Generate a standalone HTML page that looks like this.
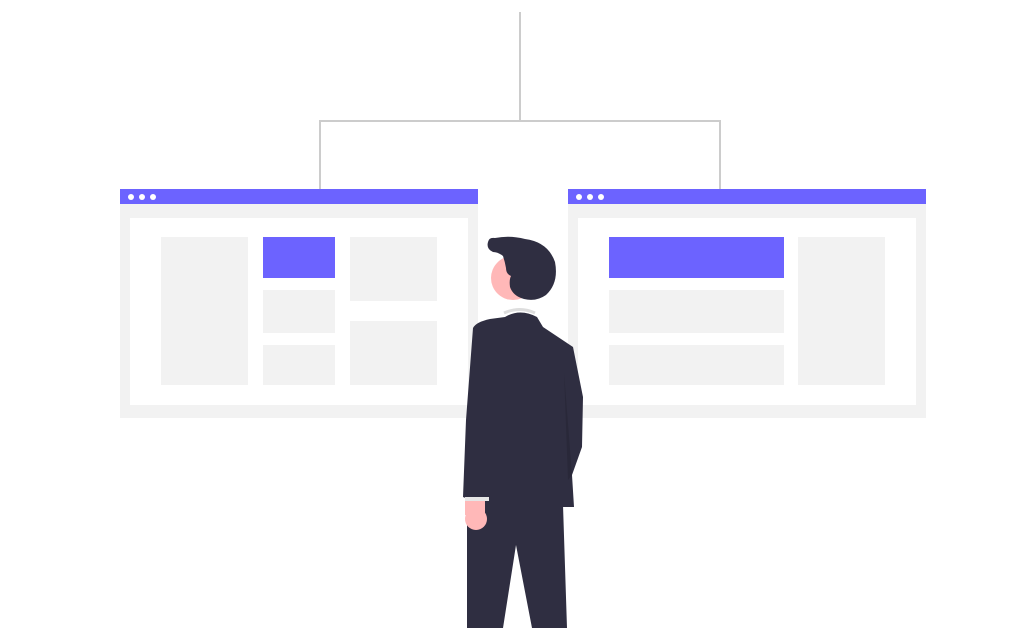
<!DOCTYPE html>
<html><head><style>
html,body{margin:0;padding:0;background:#fff;width:1031px;height:628px;overflow:hidden}
</style></head><body>
<svg width="1031" height="628" viewBox="0 0 1031 628" xmlns="http://www.w3.org/2000/svg">
<g stroke="#ccc" stroke-width="2" fill="none">
<path d="M520 12V121M320 189V121H720V189"/>
</g>
<rect x="120" y="204" width="358" height="214" fill="#f2f2f2"/>
<rect x="130" y="218" width="338" height="187" fill="#fff"/>
<rect x="120" y="189" width="358" height="15" fill="#6c63ff"/>
<circle cx="131" cy="197" r="3" fill="#fff"/><circle cx="142" cy="197" r="3" fill="#fff"/><circle cx="153" cy="197" r="3" fill="#fff"/>
<rect x="161" y="237" width="87" height="148" fill="#f2f2f2"/>
<rect x="263" y="237" width="72" height="41" fill="#6c63ff"/>
<rect x="263" y="290" width="72" height="43" fill="#f2f2f2"/>
<rect x="263" y="345" width="72" height="40" fill="#f2f2f2"/>
<rect x="350" y="237" width="87" height="64" fill="#f2f2f2"/>
<rect x="350" y="321" width="87" height="64" fill="#f2f2f2"/>
<rect x="568" y="204" width="358" height="214" fill="#f2f2f2"/>
<rect x="578" y="218" width="338" height="187" fill="#fff"/>
<rect x="568" y="189" width="358" height="15" fill="#6c63ff"/>
<circle cx="579" cy="197" r="3" fill="#fff"/><circle cx="590" cy="197" r="3" fill="#fff"/><circle cx="601" cy="197" r="3" fill="#fff"/>
<rect x="609" y="237" width="175" height="41" fill="#6c63ff"/>
<rect x="609" y="290" width="175" height="43" fill="#f2f2f2"/>
<rect x="609" y="345" width="175" height="40" fill="#f2f2f2"/>
<rect x="798" y="237" width="87" height="148" fill="#f2f2f2"/>
<path d="M467 505L467 628H503L516 545L532 628H567L563 505Z" fill="#2f2e41"/>
<path d="M473 328Q476 322 490 319L505 317Q520 308 537 317L543 327L573 347L583 397L582 447L572 475L574 507H488L463 497L466 420Z" fill="#2f2e41"/>
<path d="M564 372L572 475L568 480Z" fill="#000" opacity="0.12"/>
<path d="M504 313Q520 306 535 313" stroke="#ddd" stroke-width="3" fill="none"/>
<rect x="465" y="497" width="24" height="4" fill="#e6e6e6"/>
<circle cx="476" cy="519" r="11" fill="#ffb8b8"/>
<rect x="465" y="501" width="20" height="14" fill="#ffb8b8"/>
<circle cx="513" cy="278" r="22" fill="#ffb8b8"/>
<path d="M488 242Q489 237 495 238Q510 235 525 239Q548 242 555 262Q559 283 546 295Q536 302 524 299Q513 296 510 287Q509 280 511 276Q506 274 506 268Q505 262 503 256Q498 252 493 252Q486 249 488 242Z" fill="#2f2e41"/>
</svg>
</body></html>
